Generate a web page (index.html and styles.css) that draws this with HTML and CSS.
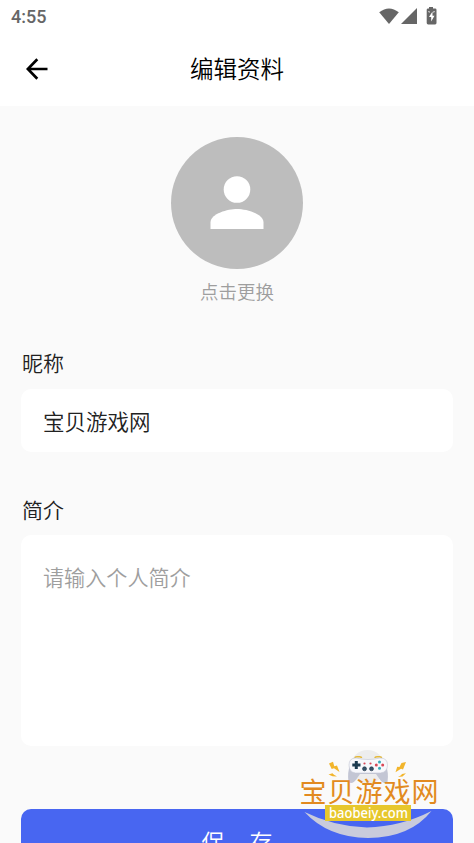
FILE: index.html
```html
<!DOCTYPE html>
<html lang="zh-CN">
<head>
    <meta charset="UTF-8">
    <meta name="viewport" content="width=device-width, initial-scale=1.0">
    <title>编辑资料</title>
    <link rel="stylesheet" href="styles.css">
</head>
<body>
    <div id="screen">
        <div id="header">
            <div class="status-bar">
                <span class="time">4:55</span>
                <svg class="status-icons" width="60" height="20" viewBox="0 0 60 20" fill="#666666">
                    <path d="M.2 5.2Q10 -2.4 19.8 5.2L10 17Z"/>
                    <path d="M22 17L38 1V17Z"/>
                    <path d="M50 0h4v1.4h2.1q1.4 0 1.4 1.4V16q0 1.4-1.4 1.4h-7q-1.400 0-1.400-1.400V2.800q0-1.400 1.400-1.400H50Z"/>
                    <path d="M53.500 4.500L50 10h2.200v4.500L55.500 8.800H53.500Z" fill="#fff"/>
                    <path d="M49 4.500l1.500-.5v2zM56 4.500l-1.500-.5v2z" fill="#fff"/>
                </svg>
            </div>
            <div class="nav-bar">
                <button class="back" aria-label="返回">
                    <svg width="22" height="22" viewBox="0 0 22 22" fill="none" stroke="#000" stroke-width="2.700">
                        <path d="M21.500 11H2M11.300 1.300L1.800 11l9.500 9.700"/>
                    </svg>
                </button>
                <h1>编辑资料</h1>
            </div>
        </div>

        <div id="main">
            <div class="avatar">
                <svg width="54" height="54" viewBox="0 0 54 54" fill="#fff">
                    <circle cx="27" cy="13.500" r="13.300"/>
                    <path d="M.5 53V46.500C.5 37.500 18 33 27 33s26.500 4.500 26.500 13.500V53Z"/>
                </svg>
            </div>
            <p class="avatar-hint">点击更换</p>

            <label for="nickname">昵称</label>
            <input type="text" id="nickname" value="宝贝游戏网">

            <label for="intro">简介</label>
            <textarea id="intro" placeholder="请输入个人简介"></textarea>

            <button class="save">保<span class="space"></span>存</button>
        </div>

        <!-- Site logo over the bottom right corner -->
        <svg class="site-logo" width="160" height="103" viewBox="0 0 160 103">
            <circle cx="77.500" cy="27" r="17" fill="#ededed"/>
            <path d="M14.500 72Q44 86.500 77 87.500Q111 86.500 141.500 71Q120 97.800 78 98Q38 97.500 14.500 72Z" fill="#c9cbdc"/>
            <g fill="#f2b52c">
                <path d="M39 23.500l4-1.700 1.300 4.400 2.700-.7 2.500 6.500-5.500-3.800-2.300.8z"/>
                <path d="M116 22l-4.500 1-2 4-2.300-.3-1.700 5.500 5.500-3.500 2 .8z"/>
                <path d="M38.500 34.500l4-1.200 1.500 1.500 3 1.700-4.500-.3zM116 33.300l-4 .7-1 1.300-3 1.700 4.500-.5z"/>
            </g>
            <path d="M58.500 42Q57 33 60.500 23h35Q99 33 97.500 42q-4 3-8-3l-3.500-5H70l-3.500 5q-4 6-8 3z" fill="#c3c6d4"/>
            <path d="M65 18q0-1.300 2-1.300h2.500q2 0 2 1.300M85 18q0-1.300 2-1.300h2.500q2 0 2 1.300" fill="none" stroke="#e4b93c" stroke-width="1.500"/>
            <path d="M66 18q6 1.500 12 1.500T90 18q7.500 0 7.500 7t-7 8q-6 0-12.500 0T65.500 33q-6.500-1-6.500-8t7-7z" fill="#f7f8fc" stroke="#c3c6d3" stroke-width=".6"/>
            <path d="M64.800 21h3v2.500h2.700v3h-2.700V29h-3v-2.500h-2.500v-3h2.500Z" fill="#1b3b50"/>
            <g fill="#d94858">
                <circle cx="86.300" cy="25" r="1.500"/>
                <circle cx="92.700" cy="25" r="1.500"/>
                <circle cx="74.500" cy="23.500" r="1.100"/>
                <circle cx="80.500" cy="23.500" r="1.100"/>
            </g>
            <circle cx="89.500" cy="22" r="1.500" fill="#37a9b7"/>
            <circle cx="89.500" cy="28.200" r="1.500" fill="#37a9b7"/>
            <g fill="#37536a" stroke="#1b3044" stroke-width=".6">
                <circle cx="74.500" cy="28.800" r="2"/>
                <circle cx="81.500" cy="28.800" r="2"/>
            </g>
            <text class="logo-name" x="9.500" y="61.500" textLength="139" lengthAdjust="spacing">宝贝游戏网</text>
            <rect x="35" y="65" width="86" height="16" fill="#e7c72c"/>
            <text class="logo-url" x="39" y="77.500" textLength="79" lengthAdjust="spacingAndGlyphs">baobeiy.com</text>
        </svg>
    </div>
</body>
</html>
```
FILE: styles.css
```css
/* General Reset */
* {
    margin: 0;
    padding: 0;
    box-sizing: border-box;
}
body {
    font-family: 'Noto Sans CJK SC', sans-serif;
    font-weight: 350;
    background-color: #fafafa;
    color: #212121;
}
button, input, textarea {
    font-family: inherit;
    font-weight: inherit;
    border: none;
    outline: none;
}
#screen {
    position: relative;
    height: 843px;
    overflow: hidden;
}
/* Header */
#header {
    height: 106px;
    background-color: #ffffff;
}
.status-bar {
    display: flex;
    justify-content: space-between;
    height: 31px;
    padding: 7px 35px 0 11px;
}
.time {
    font-family: Roboto, sans-serif;
    font-size: 18px;
    font-weight: 500;
    line-height: 20px;
    color: #666666;
}
.nav-bar {
    display: grid;
    grid-template-columns: 48px 1fr 48px;
    align-items: center;
    height: 75px;
    padding: 0 26px;
}
.back {
    display: flex;
    background: none;
    cursor: pointer;
}
h1 {
    padding-bottom: 2px;
    font-size: 23.5px;
    font-weight: 350;
    line-height: 34px;
    text-align: center;
    color: #000000;
}
/* Form */
#main {
    display: flex;
    flex-direction: column;
    padding: 31px 21px 0;
}
.avatar {
    display: flex;
    justify-content: center;
    align-items: center;
    align-self: center;
    width: 132px;
    height: 132px;
    border-radius: 50%;
    background-color: #bdbdbd;
}
.avatar-hint {
    margin-top: 9px;
    font-size: 18.5px;
    line-height: 26px;
    text-align: center;
    color: #9e9e9e;
}
label {
    padding-left: 1px;
    font-size: 21px;
    line-height: 30px;
}
#nickname {
    height: 63px;
    margin-top: 12px;
    padding: 0 22px;
    border-radius: 10px;
    background-color: #ffffff;
    color: #212121;
    font-size: 21.5px;
}
label[for="nickname"] {
    margin-top: 43px;
}
label[for="intro"] {
    margin-top: 42px;
}
#intro {
    height: 211px;
    margin-top: 11px;
    padding: 27px 22px;
    border-radius: 10px;
    background-color: #ffffff;
    color: #212121;
    font-size: 21.1px;
    line-height: 30px;
    resize: none;
}
#intro::placeholder {
    color: #9e9e9e;
}
.save {
    height: 63px;
    margin-top: 63px;
    border-radius: 10px;
    background-color: #4866f1;
    color: #ffffff;
    font-size: 23px;
    cursor: pointer;
}
.space {
    display: inline-block;
    width: 25px;
}
/* Logo */
.site-logo {
    position: absolute;
    left: 290px;
    top: 740px;
}
.logo-name {
    font-size: 27px;
    font-weight: 400;
    fill: #e28a20;
}
.logo-url {
    font-family: 'Noto Sans', sans-serif;
    font-size: 15px;
    font-weight: 500;
    fill: #ffffff;
}
```
